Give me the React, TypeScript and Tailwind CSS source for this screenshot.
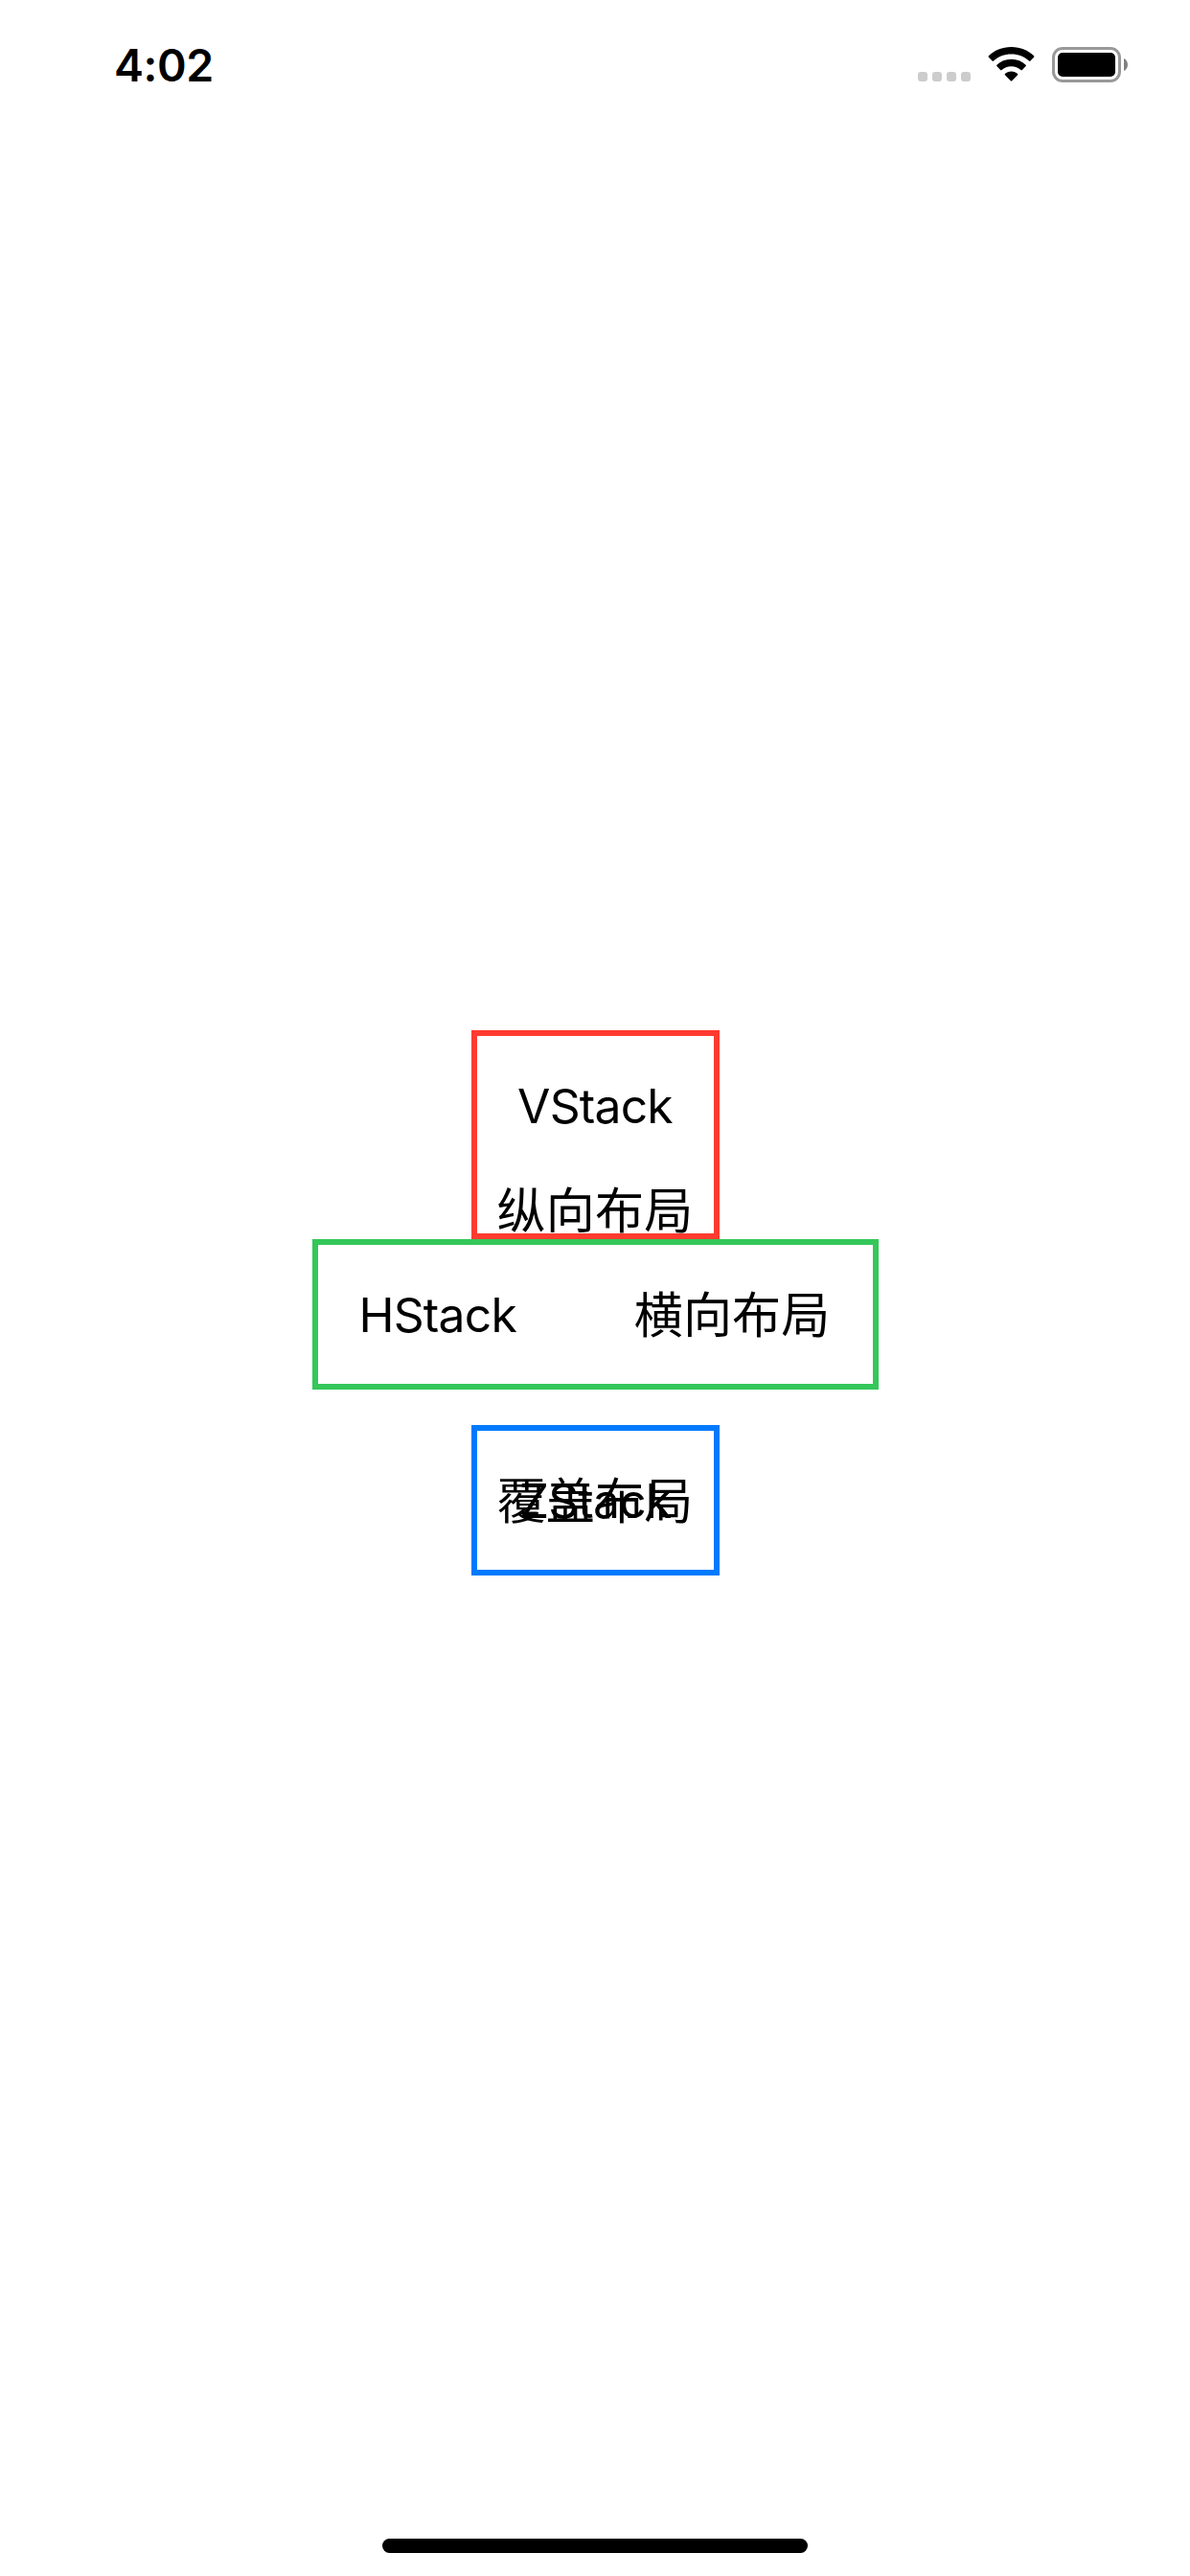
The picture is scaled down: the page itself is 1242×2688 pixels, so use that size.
import type { ReactNode } from "react";

const latin = "font-['Inter',sans-serif] text-[49.8px] tracking-[-0.8px] leading-[60px] whitespace-nowrap";
const han = "font-['Noto_Sans_CJK_SC',sans-serif] text-[51px] tracking-[0.2px] leading-[60px] whitespace-nowrap";

function Latin({ children, className = "" }: { children: ReactNode; className?: string }) {
  return <span className={`${latin} ${className}`}>{children}</span>;
}

function Han({ children, className = "" }: { children: ReactNode; className?: string }) {
  return <span lang="zh-CN" className={`${han} ${className}`}>{children}</span>;
}

function WifiIcon() {
  return (
    <svg className="ml-[18px] h-[37px] w-[49px]" viewBox="0 0 49 37">
      <path d="M24.5 0C34 0 42.3 3.5 48.1 9.3Q48.8 10 48.1 10.8L44.4 14.6Q43.7 15.2 43 14.6C38.1 10.2 31.7 7.6 24.5 7.6S10.9 10.2 6 14.6Q5.3 15.2 4.6 14.6L.9 10.8Q.2 10 .9 9.3C6.7 3.5 15 0 24.5 0Z" />
      <path d="M24.5 12.8C30.5 12.8 35.7 15 39.6 18.7Q40.3 19.4 39.6 20.1L35.9 23.9Q35.2 24.5 34.5 23.9C31.8 21.6 28.4 20.2 24.5 20.2S17.2 21.6 14.5 23.9Q13.8 24.5 13.1 23.9L9.4 20.1Q8.7 19.4 9.4 18.7C13.3 15 18.5 12.8 24.5 12.8Z" />
      <path d="M24.5 25.5C27.2 25.5 29.4 26.4 31.1 27.9Q31.8 28.6 31.1 29.3L25.2 35.3Q24.5 36 23.8 35.3L17.9 29.3Q17.2 28.6 17.9 27.9C19.6 26.4 21.8 25.5 24.5 25.5Z" />
    </svg>
  );
}

function StatusBar() {
  return (
    <header className="flex h-[132px] items-start justify-between pr-[65px] pl-[119px]">
      <time className="mt-[40px] font-['Inter',sans-serif] text-[46.5px] leading-[56px] font-semibold tracking-[-0.4px]">4:02</time>
      <div className="mt-[49px] flex items-start">
        <div className="mt-[26px] flex gap-[5px]">
          {[0, 1, 2, 3].map((i) => (
            <i key={i} className="size-[10px] rounded-[3px] bg-[#cccccc]" />
          ))}
        </div>
        <WifiIcon />
        <div className="ml-[18px] h-[37px] w-[72px] rounded-[11px] border-3 border-[#999999] p-[3px]">
          <div className="h-[25px] w-[60px] rounded-[5px] bg-black" />
        </div>
        <svg className="mt-[12px] ml-[3px] h-[13px] w-[4px]" viewBox="0 0 4 13">
          <path d="M0 0C5.3 2.2 5.3 10.8 0 13Z" fill="#808080" />
        </svg>
      </div>
    </header>
  );
}

export default function App() {
  return (
    <div className="flex h-[2688px] w-[1242px] flex-col bg-white text-black">
      <StatusBar />
      <main className="flex flex-1 flex-col items-center pt-[943px]">
        <section className="flex h-[218px] w-[259px] flex-col items-center border-6 border-[#ff3b30] pt-[43px]">
          <Latin>VStack</Latin>
          <Han className="mt-[46px]">纵向布局</Han>
        </section>
        <section className="flex h-[157px] w-[591px] justify-between border-6 border-[#34c759] pt-[43px] pr-[44px] pl-[43px]">
          <Latin>HStack</Latin>
          <Han className="-mt-[3px]">横向布局</Han>
        </section>
        <section className="mt-[37px] grid h-[157px] w-[259px] content-start justify-items-center border-6 border-[#007aff] pt-[43px]">
          <Latin className="col-start-1 row-start-1">ZStack</Latin>
          <Han className="col-start-1 row-start-1 -mt-[3px]">覆盖布局</Han>
        </section>
      </main>
      <footer className="flex h-[39px] justify-center">
        <div className="h-[15px] w-[444px] rounded-full bg-black" />
      </footer>
    </div>
  );
}
